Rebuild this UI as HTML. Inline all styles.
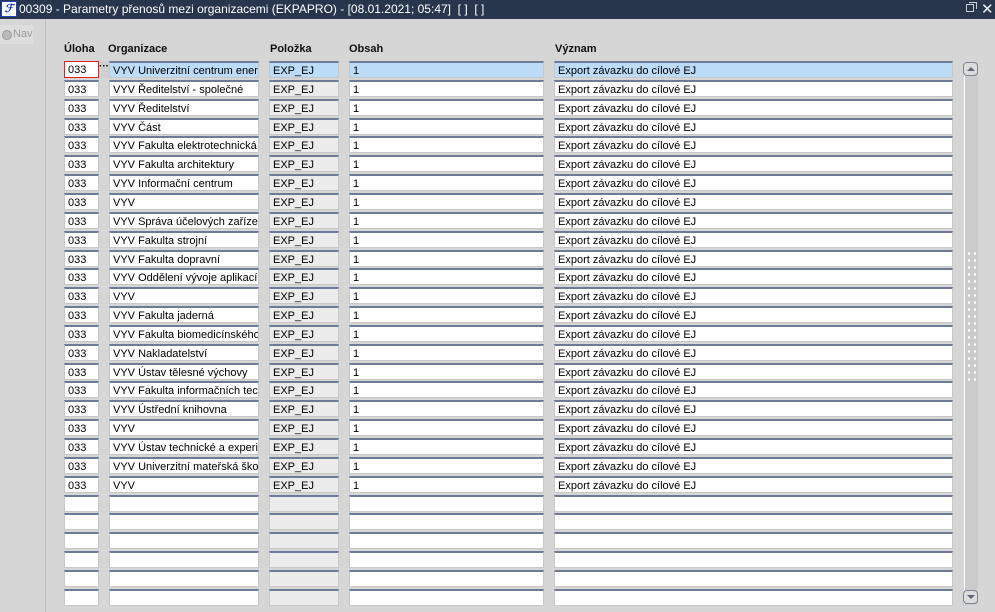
<!DOCTYPE html>
<html><head><meta charset="utf-8"><style>
*{margin:0;padding:0;box-sizing:border-box}
body{width:995px;height:612px;background:#d6d6d6;font-family:"Liberation Sans",Arial,sans-serif;position:relative;overflow:hidden}
#tb{position:absolute;left:0;top:0;width:995px;height:19px;background:#27364d;color:#fff;font-size:12px;line-height:19px}
#tb .ic{position:absolute;left:1px;top:1px;width:16px;height:16px;background:#fff;border:1px solid #2040c0;color:#1030c0;font:bold italic 11px/14px "Liberation Sans",sans-serif;text-align:center}
#tb .t{position:absolute;left:19px;top:0}
.nav{position:absolute;left:0;top:25px;width:33px;height:19px;background:#dedede;color:#9a9a9a;font-size:11px;line-height:19px;padding-left:13px}
.nav:before{content:"";position:absolute;left:2px;top:5px;width:8px;height:8px;border-radius:50%;background:#bbb;border:1px solid #999}
.vl{position:absolute;left:45px;top:19px;width:1px;height:593px;background:#bcbcbc}
.h{position:absolute;top:43px;font-size:11px;font-weight:bold;color:#111}
.f{position:absolute;height:17px;background:#fff;border:1px solid #c8c8c8;border-top:2px solid #6d7b95;font-size:11px;line-height:16px;padding-left:3px;white-space:nowrap;overflow:hidden;color:#000}
.g{background:#ececec}
.s{background:#bddcf7}
.sb{position:absolute;left:964px;top:62px;width:14px;height:543px;background:#cbcbcb;border-left:1px solid #fff}
.ab{position:absolute;left:963px;width:15px;height:14px;border:1px solid #7a8499;border-radius:4px;background:#dcdcdc}
.ab:after{content:"";position:absolute;left:3px;border-left:4px solid transparent;border-right:4px solid transparent}
.up:after{top:4px;border-bottom:4px solid #5a6580}
.dn:after{top:4px;border-top:4px solid #5a6580}
.dots{position:absolute;left:966px;top:250px;width:10px;height:135px;background-image:radial-gradient(#fff 1px,transparent 1.3px);background-size:6px 7px}
</style></head><body>
<div id="tb"><div class="ic">ℱ</div><div class="t">00309 - Parametry přenosů mezi organizacemi (EKPAPRO) - [08.01.2021; 05:47]&nbsp; [ ]&nbsp; [ ]</div>
<div style="position:absolute;left:966px;top:4px;width:8px;height:8px;border:1px solid #ccc"></div><div style="position:absolute;left:969px;top:2px;width:8px;height:7px;border:1px solid #ccc;border-bottom:none;border-left:none"></div>
<div style="position:absolute;left:981px;top:0;font-size:15px;color:#eee">✕</div></div>
<div class="nav">Nav</div>
<div class="vl"></div>
<div class="h" style="left:64px">Úloha</div>
<div class="h" style="left:108px">Organizace</div>
<div class="h" style="left:270px">Položka</div>
<div class="h" style="left:349px">Obsah</div>
<div class="h" style="left:555px">Význam</div>
<div class="sb"></div><div class="dots"></div>
<div class="ab up" style="top:62px"></div><div class="ab dn" style="top:590px"></div>
<div id="rows"></div>
<script>
var n=["Univerzitní centrum energ","Ředitelství - společné","Ředitelství","Část","Fakulta elektrotechnická","Fakulta architektury","Informační centrum","","Správa účelových zaříze","Fakulta strojní","Fakulta dopravní","Oddělení vývoje aplikací","","Fakulta jaderná","Fakulta biomedicínského","Nakladatelství","Ústav tělesné výchovy","Fakulta informačních tech","Ústřední knihovna","","Ústav technické a experi","Univerzitní mateřská škol",""];
var h="";
for(var i=0;i<29;i++){var y=Math.round(61+i*18.85),d=i<23,s=i==0;
h+='<div class="f" style="left:64px;top:'+y+'px;width:35px;'+(s?'border:1px solid #e02020;line-height:17px;':'')+'">'+(d?'033':'')+'</div>';
h+='<div class="f'+(s?' s':'')+'" style="left:109px;top:'+y+'px;width:150px">'+(d?'VYV '+n[i]:'')+'</div>';
h+='<div class="f g'+(s?' s':'')+'" style="left:269px;top:'+y+'px;width:70px">'+(d?'EXP_EJ':'')+'</div>';
h+='<div class="f'+(s?' s':'')+'" style="left:349px;top:'+y+'px;width:195px">'+(d?'1':'')+'</div>';
h+='<div class="f'+(s?' s':'')+'" style="left:554px;top:'+y+'px;width:399px">'+(d?'Export závazku do cílové EJ':'')+'</div>';}
h+='<div style="position:absolute;left:99px;top:61px;width:10px;height:17px;background:#d0d0d0;font-size:10px;font-weight:bold;line-height:12px;text-align:center">···</div>';
document.getElementById("rows").innerHTML=h;
</script>
</body></html>
